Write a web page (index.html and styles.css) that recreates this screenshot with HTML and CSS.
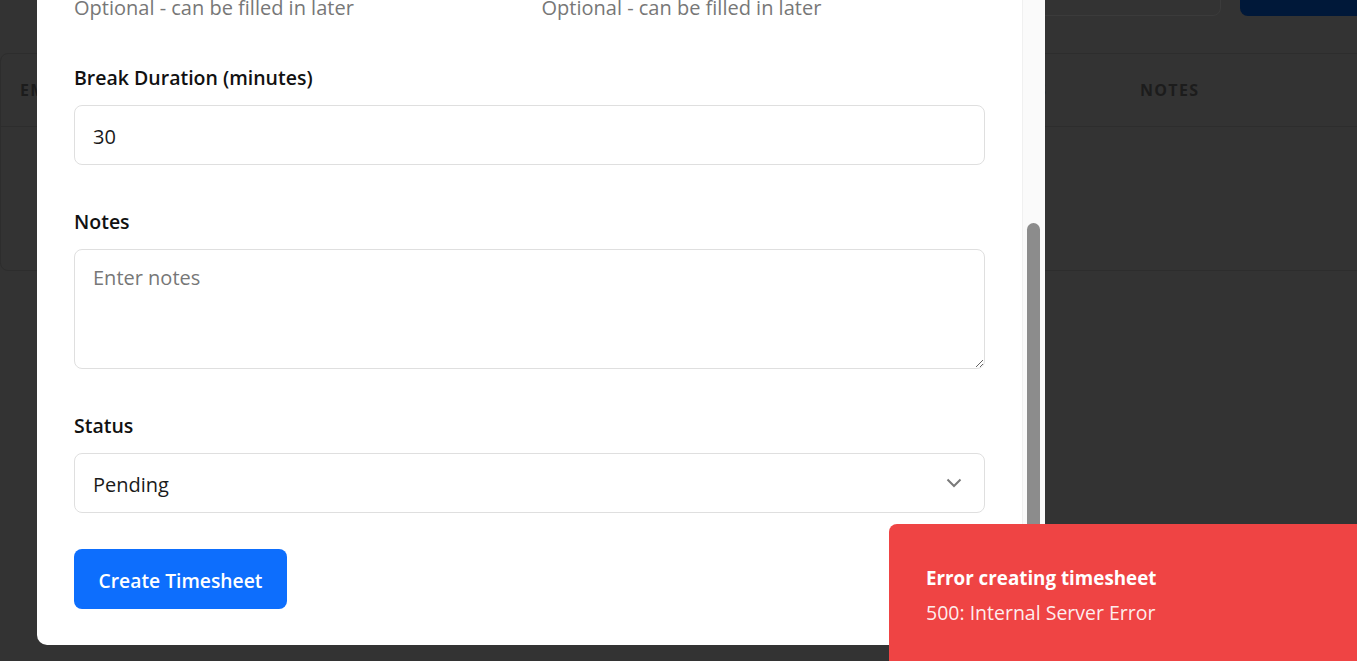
FILE: index.html
```html
<!DOCTYPE html>
<html lang="en">
<head>
<meta charset="utf-8">
<title>Timesheets</title>
<link rel="stylesheet" href="styles.css">
</head>
<body>
<div class="page">
  <header class="topbar">
    <h1 class="title">Timesheets</h1>
    <div class="actions">
      <div class="search"></div>
      <div class="navy-btn"></div>
    </div>
  </header>
  <div class="card">
    <div class="thead">
      <div class="th">Employee</div>
      <div class="th">Date</div>
      <div class="th">Clock In</div>
      <div class="th">Clock Out</div>
      <div class="th">Break</div>
      <div class="th">Hours</div>
      <div class="th">Status</div>
      <div class="th">Notes</div>
    </div>
    <div class="tbody">
      <div class="empty">No timesheets found</div>
    </div>
  </div>
</div>

<div class="modal">
  <div class="modal-body">
    <div class="helpers">
      <div class="help">Optional - can be filled in later</div>
      <div class="help">Optional - can be filled in later</div>
    </div>
    <div class="field">
      <label class="label" for="brk">Break Duration (minutes)</label>
      <input id="brk" class="control" type="text" value="30">
    </div>
    <div class="field">
      <label class="label" for="notes">Notes</label>
      <textarea id="notes" class="control area" placeholder="Enter notes"></textarea>
    </div>
    <div class="field">
      <label class="label" for="status">Status</label>
      <div class="select-wrap">
        <select id="status" class="control select">
          <option>Pending</option>
          <option>Approved</option>
          <option>Rejected</option>
        </select>
        <svg class="chev" width="16" height="10" viewBox="0 0 16 10"><path d="M1.5 1.5 L8 8 L14.5 1.5" fill="none" stroke="#7a7a7a" stroke-width="2"/></svg>
      </div>
    </div>
    <button class="submit" type="button">Create Timesheet</button>
  </div>
  <div class="scrolltrack"><div class="thumb"></div></div>
</div>

<div class="toast">
  <div class="toast-title">Error creating timesheet</div>
  <div class="toast-msg">500: Internal Server Error</div>
</div>
</body>
</html>
```
FILE: styles.css
```css
* { box-sizing: border-box; }
html, body { margin: 0; height: 100%; }
body {
  background: #333333;
  font-family: "Open Sans", "Noto Sans", sans-serif;
  overflow: hidden;
  position: relative;
}
.page { display: flex; flex-direction: column; }
.topbar {
  height: 53px;
  display: flex;
  justify-content: space-between;
  align-items: flex-start;
  overflow: hidden;
}
.title {
  margin: -31px 0 0 -2px;
  font-size: 34px;
  line-height: 36px;
  font-weight: 700;
  color: #1b1b1b;
}
.actions { display: flex; gap: 19px; margin-top: -34px; }
.search {
  width: 360px; height: 50px;
  border: 1px solid #3b3b3b;
  border-radius: 8px;
}
.navy-btn {
  width: 140px; height: 50px;
  background: #001839;
  border-radius: 8px;
  margin-right: -23px;
}
.card {
  border: 1px solid #2d2d2d;
  border-radius: 8px;
  margin-right: -10px;
}
.thead {
  display: grid;
  grid-template-columns: repeat(7, 160px) 1fr;
  height: 73px;
  align-items: center;
  border-bottom: 1px solid #2d2d2d;
}
.th {
  padding: 0 19px;
  font-size: 16px;
  font-weight: 700;
  letter-spacing: 1.3px;
  text-transform: uppercase;
  color: #1c1c1c;
  white-space: nowrap;
}
.tbody { height: 143px; display: flex; align-items: center; justify-content: center; }
.empty { color: #2a2a2a; font-size: 16px; }

.modal {
  position: absolute;
  left: 37px; top: 0;
  width: 1008px; height: 645px;
  background: #ffffff;
  border-radius: 0 0 10px 10px;
  overflow: hidden;
  display: flex;
}
.modal-body {
  flex: 1;
  padding: 0 37px 36px;
  display: flex;
  flex-direction: column;
  align-items: stretch;
}
.helpers {
  display: grid;
  grid-template-columns: 1fr 1fr;
  gap: 24px;
  margin-top: -7px;
}
.help { font-size: 20px; line-height: 30px; color: #777777; }
.field { display: flex; flex-direction: column; margin-top: 39px; }
.field + .field { margin-top: 41px; }
.label {
  font-size: 19.5px;
  line-height: 30px;
  padding-top: 1px;
  font-weight: 600;
  color: #111111;
  margin-bottom: 12px;
}
.control {
  font-family: inherit;
  font-size: 20px;
  color: #1a1a1a;
  height: 60px;
  border: 1px solid #dfdfdf;
  border-radius: 8px;
  padding: 2px 18px 0;
  background: #ffffff;
  outline: none;
  width: 100%;
}
.area { height: 120px; padding: 13px 18px; line-height: 30px; resize: vertical; }
.area::placeholder { color: #777777; }
.select-wrap { position: relative; }
.select { appearance: none; -webkit-appearance: none; }
.chev { position: absolute; right: 23px; top: 25px; pointer-events: none; }
.submit {
  align-self: flex-start;
  margin-top: 36px;
  width: 213px; height: 60px;
  border: 0;
  border-radius: 8px;
  background: #0d6efd;
  color: #ffffff;
  font-family: inherit;
  font-size: 19.3px;
  font-weight: 600;
  padding: 2px 0 0;
}
.scrolltrack {
  width: 23px;
  background: #fafafa;
  border-left: 1px solid #f0f0f0;
  padding-left: 4px;
}
.thumb {
  width: 13px;
  height: 420px;
  margin-top: 223px;
  background: #8c8c8c;
  border-radius: 7px;
}
.toast {
  position: absolute;
  left: 889px; top: 524px;
  right: 0; bottom: 0;
  background: #ef4444;
  border-radius: 8px 0 0 0;
  padding: 39px 37px 0;
  color: #ffffff;
}
.toast-title { font-size: 18.8px; line-height: 30px; font-weight: 700; }
.toast-msg { font-size: 19.5px; line-height: 30px; margin-top: 5px; color: rgba(255,255,255,0.92); }
```
